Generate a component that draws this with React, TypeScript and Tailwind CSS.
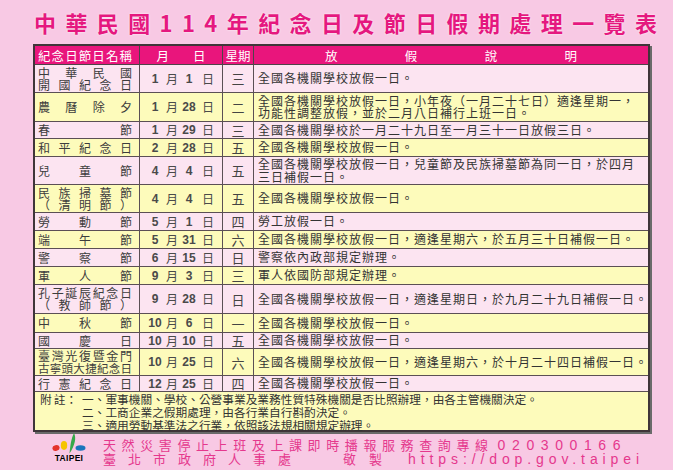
import React from "react";

type Row = {
  name: string[];
  m: string;
  d: string;
  w: string;
  desc: string[];
  h: string;
  y: boolean;
};

const rows: Row[] = [
  { name: ["中華民國", "開國紀念日"], m: "1", d: "1", w: "三", desc: ["全國各機關學校放假一日。"], h: "h-[28px]", y: false },
  { name: ["農曆除夕"], m: "1", d: "28", w: "二", desc: ["全國各機關學校放假一日，小年夜（一月二十七日）適逢星期一，", "功能性調整放假，並於二月八日補行上班一日。"], h: "h-[29px]", y: true },
  { name: ["春節"], m: "1", d: "29", w: "三", desc: ["全國各機關學校於一月二十九日至一月三十一日放假三日。"], h: "h-[17px]", y: false },
  { name: ["和平紀念日"], m: "2", d: "28", w: "五", desc: ["全國各機關學校放假一日。"], h: "h-[18px]", y: true },
  { name: ["兒童節"], m: "4", d: "4", w: "五", desc: ["全國各機關學校放假一日，兒童節及民族掃墓節為同一日，於四月", "三日補假一日。"], h: "h-[28px]", y: false },
  { name: ["民族掃墓節", "（清明節）"], m: "4", d: "4", w: "五", desc: ["全國各機關學校放假一日。"], h: "h-[28px]", y: true },
  { name: ["勞動節"], m: "5", d: "1", w: "四", desc: ["勞工放假一日。"], h: "h-[18px]", y: false },
  { name: ["端午節"], m: "5", d: "31", w: "六", desc: ["全國各機關學校放假一日，適逢星期六，於五月三十日補假一日。"], h: "h-[18px]", y: true },
  { name: ["警察節"], m: "6", d: "15", w: "日", desc: ["警察依內政部規定辦理。"], h: "h-[18px]", y: false },
  { name: ["軍人節"], m: "9", d: "3", w: "三", desc: ["軍人依國防部規定辦理。"], h: "h-[18px]", y: true },
  { name: ["孔子誕辰紀念日", "（教師節）"], m: "9", d: "28", w: "日", desc: ["全國各機關學校放假一日，適逢星期日，於九月二十九日補假一日。"], h: "h-[29px]", y: false },
  { name: ["中秋節"], m: "10", d: "6", w: "一", desc: ["全國各機關學校放假一日。"], h: "h-[19px]", y: true },
  { name: ["國慶日"], m: "10", d: "10", w: "五", desc: ["全國各機關學校放假一日。"], h: "h-[16px]", y: false },
  { name: ["臺灣光復暨金門", "古寧頭大捷紀念日"], m: "10", d: "25", w: "六", desc: ["全國各機關學校放假一日，適逢星期六，於十月二十四日補假一日。"], h: "h-[27px]", y: true },
  { name: ["行憲紀念日"], m: "12", d: "25", w: "四", desc: ["全國各機關學校放假一日。"], h: "h-[16px]", y: false },
];

function Spread({ text, cls }: { text: string; cls?: string }) {
  return (
    <div className={"flex justify-between " + (cls ?? "")}>
      {Array.from(text).map((c, i) => (
        <span key={i}>{c}</span>
      ))}
    </div>
  );
}

function Logo() {
  return (
    <div className="flex flex-col items-center w-[34px] -mt-[1px]">
      <svg width="34" height="22" viewBox="0 0 34 22">
        <ellipse cx="4" cy="16" rx="3.6" ry="2.8" fill="#e4322b" transform="rotate(-15 4 16)" />
        <ellipse cx="12" cy="13.5" rx="3.2" ry="4.4" fill="#f5c400" />
        <path d="M22 1 C24.5 6 23 13 17.5 21.5 C18.5 13 19 7 22 1Z" fill="#36a84a" />
        <ellipse cx="28.5" cy="16" rx="5" ry="2.8" fill="#1b75bc" />
      </svg>
      <div className="text-[8.5px] leading-[8px] font-bold text-black tracking-[0.3px]" style={{ fontFamily: '"Liberation Sans", Arial, sans-serif' }}>
        TAIPEI
      </div>
    </div>
  );
}

export default function App() {
  const cjk = '"Noto Sans CJK TC", "Noto Sans", sans-serif';
  const lat = '"Liberation Sans", Arial, sans-serif';
  return (
    <div className="w-[673px] h-[470px] bg-[#f8c9e4] overflow-hidden" style={{ fontFamily: cjk }}>
      {/* Title */}
      <div className="h-[44px] pl-[34px] pt-[10px]">
        <div className="text-[22px] leading-[24px] font-bold tracking-[9.4px] text-[#e5187f] whitespace-nowrap [text-shadow:0_0_2px_#ffffff]">
          中華民國114年紀念日及節日假期處理一覽表
        </div>
      </div>

      {/* Table */}
      <div className="ml-[33px] w-[617px] border-2 border-[#3f3539] shadow-[2px_2px_0_#6a6a6a]">
        {/* Header */}
        <div className="grid grid-cols-[105px_83px_31px_1fr] h-[19px] bg-[#e9157c] text-white text-[12.5px] leading-[13px] border-b border-[#4f4348]">
          <div className="border-r border-[#4f4348] flex items-center pl-[3px] pr-[7px]">
            <Spread text="紀念日節日名稱" cls="w-full" />
          </div>
          <div className="border-r border-[#4f4348] flex items-center justify-center gap-[24px]">
            <span>月</span>
            <span>日</span>
          </div>
          <div className="border-r border-[#4f4348] flex items-center justify-center">
            <span>星期</span>
          </div>
          <div className="flex items-center px-[71px]">
            <Spread text="放假說明" cls="w-full" />
          </div>
        </div>

        {rows.map((r, i) => (
          <div
            key={i}
            className={
              "grid grid-cols-[105px_83px_31px_1fr] border-b border-[#5b4f55] text-[#333333] " +
              r.h +
              " " +
              (r.y ? "bg-[#fdfbbb]" : "bg-[#fce4f1]")
            }
          >
            <div className="border-r border-[#5b4f55] flex flex-col justify-center pl-[3px] pr-[7px] text-[12px] leading-[12px] text-[#3d3d3d]">
              {r.name.map((n, j) => (
                <Spread key={j} text={n} cls={Array.from(n).length >= 8 ? "text-[11.5px]" : ""} />
              ))}
            </div>
            <div className="border-r border-[#5b4f55] flex items-center justify-center text-[12px] leading-[12px] text-[#4a4a4a]">
              <span className="w-[14px] text-center font-bold text-[12px]" style={{ fontFamily: lat }}>{r.m}</span>
              <span className="ml-[4px]">月</span>
              <span className="ml-[3px] w-[16px] text-center font-bold text-[12px]" style={{ fontFamily: lat }}>{r.d}</span>
              <span className="ml-[5px]">日</span>
            </div>
            <div className="border-r border-[#5b4f55] flex items-center justify-center text-[13px] leading-[13px] text-[#444444]">
              {r.w}
            </div>
            <div className="flex flex-col justify-center pl-[4px] text-[12px] leading-[12.5px] tracking-[1px] whitespace-nowrap">
              {r.desc.map((t, j) => (
                <div key={j}>{t}</div>
              ))}
            </div>
          </div>
        ))}

        {/* Footnote */}
        <div className="bg-[#fdfbbb] h-[38px] pl-[5px] flex text-[11.7px] leading-[13px] text-[#333333] whitespace-nowrap">
          <div className="w-[42px] flex">
            <span>附</span>
            <span className="ml-[2px]">註：</span>
          </div>
          <div className="flex flex-col">
            <div>一、軍事機關、學校、公營事業及業務性質特殊機關是否比照辦理，由各主管機關決定。</div>
            <div>二、工商企業之假期處理，由各行業自行斟酌決定。</div>
            <div>三、適用勞動基準法之行業，依照該法規相關規定辦理。</div>
          </div>
        </div>
      </div>

      {/* Footer */}
      <div className="flex pl-[52px] mt-[1px]">
        <Logo />
        <div className="ml-[17px] mt-[6px] text-[#e5388d] whitespace-nowrap">
          <div className="text-[13px] leading-[12px] tracking-[5.6px] flex items-end">
            <span>天然災害停止上班及上課即時播報服務查詢專線</span>
            <span className="ml-[4px] text-[14px] tracking-[6.6px]" style={{ fontFamily: lat }}>020300166</span>
          </div>
          <div className="text-[13px] leading-[12px] mt-[2px] flex items-end">
            <span className="tracking-[12px]">臺北市政府人事處</span>
            <span className="ml-[40px] tracking-[13px]">敬製</span>
            <span className="ml-[13px] text-[14px] tracking-[4.9px]" style={{ fontFamily: lat }}>https://dop.gov.taipei</span>
          </div>
        </div>
      </div>
    </div>
  );
}
